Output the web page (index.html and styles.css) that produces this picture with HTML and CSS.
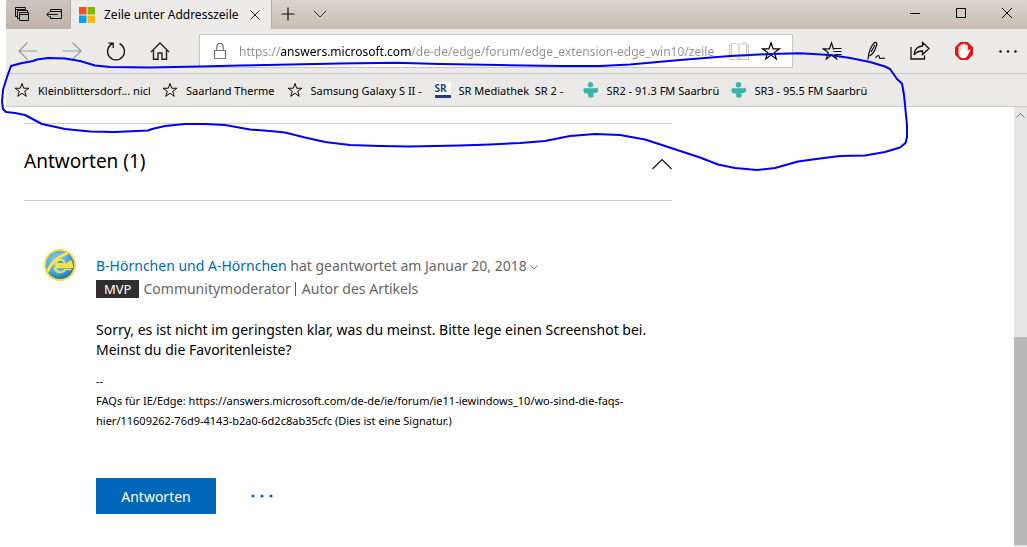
FILE: index.html
```html
<!DOCTYPE html>
<html lang="de">
<head>
<meta charset="utf-8">
<title>Zeile unter Addresszeile</title>
<link rel="stylesheet" href="styles.css">
</head>
<body>
<svg class="defs" width="0" height="0" aria-hidden="true">
  <symbol id="star" viewBox="0 0 20 20"><path d="M10 1.8 12.1 7.8H18.6L13.4 11.6 15.3 17.9 10 14.1 4.7 17.9 6.6 11.6 1.4 7.8H7.9Z" fill="none" stroke="currentColor" stroke-width="1.2"/></symbol>
  <symbol id="tunein" viewBox="0 0 16 16"><g fill="#38b4a8"><circle cx="7.5" cy="2.7" r="2.7"/><path d="M2 6.200H12L14.800 5.800 15.200 8.500C15 10.500 13 11 10.500 11V14.600Q8 17 5.200 14.800V11.500H3Q.4 11 .4 8.500T2 6.200Z"/></g></symbol>
</svg>
<div class="window">
  <header class="chrome">
    <div class="tabbar">
      <div class="tab-tools">
        <button class="tab-btn" aria-label="Beiseitegelegte Tabs"><svg width="16" height="16" viewBox="0 0 16 16" fill="none" stroke="#111"><path d="M3.5 10.5H1.5V1.500H11.500V3.500M1.500 3.500H11M5.500 12.500H3.500V4.500H13.500V6.500M5.500 6.500H14.500V14.500H5.500ZM5.500 8.500H14.500"/></svg></button>
        <button class="tab-btn" aria-label="Tabs beiseitelegen"><svg width="16" height="16" viewBox="0 0 16 16" fill="none" stroke="#111"><path d="M4.500 6V3.500H15.500V12.500H4.500V10M4.500 5.500H15.500M.8 8.500H11.500M3.500 5.800.8 8.500 3.500 11.200"/></svg></button>
      </div>
      <div class="tab">
        <svg width="16" height="16" viewBox="0 0 16 16"><path fill="#f25022" d="M0 0h7.500v7.500H0z"/><path fill="#7fba00" d="M8.500 0H16v7.500H8.500z"/><path fill="#00a4ef" d="M0 8.500h7.500V16H0z"/><path fill="#ffb900" d="M8.500 8.500H16V16H8.500z"/></svg>
        <span class="tab-title">Zeile unter Addresszeile</span>
        <button class="tab-btn" aria-label="Tab schließen"><svg width="12" height="12" viewBox="0 0 12 12" stroke="#222"><path d="M1.500 1.500 10.500 10.500M10.500 1.500 1.500 10.500"/></svg></button>
      </div>
      <button class="tab-btn" aria-label="Neuer Tab"><svg width="14" height="14" viewBox="0 0 14 14" stroke="#111" stroke-width="1.200"><path d="M7 .5V13.500M.5 7H13.500"/></svg></button>
      <button class="tab-btn" aria-label="Tabvorschau"><svg width="14" height="14" viewBox="0 0 14 14" fill="none" stroke="#333"><path d="M1 4 7 10 13 4"/></svg></button>
      <div class="win-controls">
        <button class="win-btn" aria-label="Minimieren"><svg width="12" height="12" viewBox="0 0 12 12" stroke="#000"><path d="M1 6.500H11"/></svg></button>
        <button class="win-btn" aria-label="Maximieren"><svg width="12" height="12" viewBox="0 0 12 12" fill="none" stroke="#000"><path d="M1.500 1.500H10.500V10.500H1.500Z"/></svg></button>
        <button class="win-btn" aria-label="Schließen"><svg width="12" height="12" viewBox="0 0 12 12" stroke="#000"><path d="M1 1 11 11M11 1 1 11"/></svg></button>
      </div>
    </div>

    <div class="toolbar">
      <button class="tool" aria-label="Zurück"><svg width="20" height="20" viewBox="0 0 20 20" fill="none" stroke="#999" stroke-width="1.200"><path d="M19.500 10H1M9.500 1.500 1 10 9.500 18.500"/></svg></button>
      <button class="tool" aria-label="Vorwärts"><svg width="20" height="20" viewBox="0 0 20 20" fill="none" stroke="#999" stroke-width="1.200"><path d="M.5 10H19M10.500 1.500 19 10 10.500 18.500"/></svg></button>
      <button class="tool" aria-label="Aktualisieren"><svg width="20" height="20" viewBox="0 0 20 20" fill="none" stroke="#111" stroke-width="1.300"><path d="M6.500 2.700A8.500 8.500 0 1 0 13.500 2.700M2.500 2.200H7.200V7"/></svg></button>
      <button class="tool" aria-label="Startseite"><svg width="20" height="20" viewBox="0 0 20 20" fill="none" stroke="#222" stroke-width="1.400"><path d="M1 11 10 2 19 11M3.500 9V18.300H8V12H12V18.300H16.500V9"/></svg></button>
      <div class="address">
        <svg width="14" height="18" viewBox="0 0 14 18" fill="none" stroke="#777" stroke-width="1.200"><path d="M1.500 8.500H12.500V16.500H1.500ZM3.800 8.500V4.500A3.200 3.200 0 0 1 10.200 4.500V8.500"/></svg>
        <input class="url" type="text" aria-label="Adresse" value="https://answers.microsoft.com/de-de/edge/forum/edge_extension-edge_win10/zeile">
        <button class="address-btn" aria-label="Leseansicht"><svg width="20" height="20" viewBox="0 0 20 20" fill="none" stroke="#c4c4c4"><path d="M10 4.500C8 2 4.500 2 2.500 2.500V16C5 15.500 8 15.500 10 18 12 15.500 15 15.500 17.500 16V2.500C15.500 2 12 2 10 4.500V18M2.500 4.500H.5V18.500H19.500V4.500H17.500"/></svg></button>
        <button class="address-btn" aria-label="Zu Favoriten hinzufügen"><svg width="20" height="20"><use href="#star"/></svg></button>
      </div>
      <button class="tool" aria-label="Favoriten"><svg width="20" height="20" viewBox="0 0 20 20" fill="none" stroke="#111" stroke-width="1.200"><path d="M12.500 7.800H11.400L9.500 1.800 7.500 7.800H1.200L6.200 11.600 4.300 17.900 9.500 14.100 14.500 17.700 12.800 13.500M12 7.500H19.500M11.500 10.500H19.500M13 13.500H19.500"/></svg></button>
      <button class="tool" aria-label="Webseitennotiz"><svg width="20" height="20" viewBox="0 0 20 20" fill="none" stroke="#111" stroke-width="1.200"><path d="M2 18.500C2.500 12 5 5 8.500 1.500 11 .8 11.500 3 10 6 8.500 10.500 6.500 13.500 3.500 15M5 11 9 4M9.500 17C11 14.500 12.500 14 13 15S13 17.500 14.500 17.500 16.500 16.500 19 17.500"/></svg></button>
      <button class="tool" aria-label="Teilen"><svg width="20" height="20" viewBox="0 0 20 20" fill="none" stroke="#111" stroke-width="1.300"><path d="M1 6V18H14.500V14.500M12.500 1.500 19 7.500 12.500 13.500V10C8.500 10 6 11 4 14 4.500 8.500 7.500 5.300 12.500 5Z"/></svg></button>
      <button class="tool" aria-label="AdBlock"><svg width="20" height="20" viewBox="0 0 20 20"><path fill="#ee1212" d="M6.200 1H13.800L19 6.200V13.800L13.800 19H6.200L1 13.800V6.200Z"/><path fill="#fff" d="M4.600 10.500V5.500Q5.600 4.500 6.600 5.500V3.800Q7.700 2.700 8.800 3.800V3Q10 2 11.300 3V4.200Q12.600 3.200 13.700 4.500V10L15.300 8.300Q16.700 8.200 16.300 9.600L13.200 15.300Q12 17.500 9 17.300 5 16.700 4.600 13Z"/><path d="M6.700 5.500V9.500M8.900 4V9M11.300 4V9" stroke="#e9b0b0" stroke-width=".6"/></svg></button>
      <button class="tool" aria-label="Einstellungen und mehr"><svg width="20" height="20" viewBox="0 0 20 20" fill="#111"><circle cx="2.500" cy="10.500" r="1.200"/><circle cx="10" cy="10.500" r="1.200"/><circle cx="17.500" cy="10.500" r="1.200"/></svg></button>
    </div>

    <nav class="favorites" aria-label="Favoritenleiste">
      <a class="fav" href="#"><svg width="16" height="16"><use href="#star"/></svg><span>Kleinblittersdorf... nicht</span></a>
      <a class="fav fav-short" href="#"><svg width="16" height="16"><use href="#star"/></svg><span>Saarland Therme</span></a>
      <a class="fav" href="#"><svg width="16" height="16"><use href="#star"/></svg><span>Samsung Galaxy S II -</span></a>
      <a class="fav" href="#"><b class="sr-logo">SR</b><span>SR Mediathek  SR 2 -</span></a>
      <a class="fav" href="#"><svg width="16" height="16"><use href="#tunein"/></svg><span>SR2 - 91.3 FM Saarbrücken</span></a>
      <a class="fav" href="#"><svg width="16" height="16"><use href="#tunein"/></svg><span>SR3 - 95.5 FM Saarbrücken</span></a>
    </nav>
  </header>

  <div class="viewport">
    <main class="page">
      <div class="answers-head">
        <h2>Antworten (1)</h2>
        <button class="collapse" aria-label="Einklappen"><svg width="20" height="12" viewBox="0 0 20 12" fill="none" stroke="#111" stroke-width="1.200"><path d="M.5 11 10 1.500 19.500 11"/></svg></button>
      </div>
      <article class="answer">
        <svg class="avatar" width="32" height="32" viewBox="0 0 32 32">
          <defs><radialGradient id="ball" cx=".4" cy=".35" r=".65"><stop offset="0" stop-color="#8fd6f4"/><stop offset=".6" stop-color="#4aaee0"/><stop offset="1" stop-color="#1f78b8"/></radialGradient></defs>
          <circle cx="16" cy="16" r="16" fill="#f6da3c"/>
          <circle cx="16" cy="16" r="14" fill="url(#ball)"/>
          <path d="M10 18.500H29.500M10.500 18.500C11 25 19 25 21.500 20.500H27" fill="none" stroke="#f6e04c" stroke-width="1.200"/>
          <path d="M11 14.500C12 8 20.500 8 21.500 14.500ZM11.500 18H29C29 15 28.500 13 27 11L22 14.500H11Z" fill="#f8e04a"/>
          <path d="M13.500 14C14.500 11 18.500 11 19.500 14Z" fill="#3f9fd6"/>
          <path d="M11.500 18.500C13 24 19 24 21.500 20.500L27.500 20.500" fill="none" stroke="#f8e04a" stroke-width="1.500"/>
          <path d="M3.500 23C6 14.500 14 7 24 4" fill="none" stroke="#f6da3c" stroke-width="3"/>
          <path d="M4.500 21C8 14 15 7.500 23 4.500" fill="none" stroke="#fff3a0"/>
        </svg>
        <div class="answer-body">
          <p class="byline"><a href="#">B-Hörnchen und A-Hörnchen</a> hat geantwortet am Januar 20, 2018 <svg width="8" height="5" viewBox="0 0 8 5" fill="none" stroke="#888"><path d="M.5.5 4 4 7.500.5"/></svg></p>
          <p class="roles"><span class="mvp">MVP</span><span>Communitymoderator</span><span class="author">Autor des Artikels</span></p>
          <p class="text">Sorry, es ist nicht im geringsten klar, was du meinst. Bitte lege einen Screenshot bei.<br>Meinst du die Favoritenleiste?</p>
          <p class="signature">--<br>FAQs für IE/Edge: https://answers.microsoft.com/de-de/ie/forum/ie11-iewindows_10/wo-sind-die-faqs-<br>hier/11609262-76d9-4143-b2a0-6d2c8ab35cfc (Dies ist eine Signatur.)</p>
          <div class="actions">
            <button class="reply">Antworten</button>
            <button class="more" aria-label="Weitere Optionen"><svg width="24" height="6" viewBox="0 0 24 6" fill="#0067d0"><circle cx="3" cy="3" r="1.600"/><circle cx="12" cy="3" r="1.600"/><circle cx="21" cy="3" r="1.600"/></svg></button>
          </div>
        </div>
      </article>
    </main>
    <div class="scrollbar" aria-hidden="true">
      <svg width="9" height="6" viewBox="0 0 9 6" fill="none" stroke="#777"><path d="M.5 5.500 4.500 1.500 8.500 5.500"/></svg>
      <div class="thumb"></div>
    </div>
  </div>
</div>

<svg class="marker" width="912" height="174" viewBox="0 0 912 174" aria-hidden="true"><path d="M11 66 20 63.500 33 61 37 59.500 48 58 65 58.500 80 61 95 65.500 110 67 150 67.500 200 66.500 240 65.500 340 63.500 395 62.700 440 64 500 65 560 66 600 66 630 64.500 680 60 730 56 770 54 800 53.300 830 55 850 58 870 62 885 66.500 890 69 897 79 902 83.500 904 95 905.500 110 907 125 907 137 905.500 143 900 147.500 885 152 865 155.500 840 156 820 158.500 798 161.500 775 168 757 170 735 168 718 164.500 700 157.500 665 146 645 139.500 620 135 595 134 570 136 545 141 520 143 490 144.500 460 145.500 410 146.500 380 146 350 145 325 142 305 137.500 285 132.500 270 131 250 129.500 225 125 205 124 185 124 165 126 152 129 148 130.500 115 132 90 131.500 65 129 42 124 25 115 15 113 6 112 3 109 2 102 3 90 7 77Z"/></svg>
</body>
</html>
```
FILE: styles.css
```css
* { box-sizing: border-box; }

body {
  margin: 0;
  overflow-x: hidden;
  position: relative;
  background: #fff;
  color: #000;
  font-family: "Noto Sans", "Open Sans", sans-serif;
  font-size: 14px;
}

p, h2 { margin: 0; }

a { text-decoration: none; }

button {
  display: flex;
  align-items: center;
  justify-content: center;
  flex: none;
  padding: 0;
  border: 0;
  background: none;
  font: inherit;
}

.defs { position: absolute; }

.window {
  display: flex;
  flex-direction: column;
  min-height: 100vh;
  padding-left: 6px;
}

/* Browser chrome */
.chrome { margin-right: -3px; }

.tabbar {
  display: flex;
  height: 29px;
  background: linear-gradient(#dcd4cc, #c8beb6);
}

.tab-tools {
  display: flex;
  background: linear-gradient(#cec5bf, #c0b2aa);
}

.tab-btn {
  width: 32px;
  height: 27px;
}

.tab {
  display: flex;
  align-items: center;
  width: 202px;
  padding-left: 8px;
  border: solid #b5aea8;
  border-width: 0 1px;
  background: #edebe9;
}

.tab-title {
  flex: 1;
  margin-left: 9px;
  overflow: hidden;
  white-space: nowrap;
  font-size: 12px;
}

.win-controls {
  display: flex;
  margin-left: auto;
}

.win-btn {
  width: 46px;
  height: 26px;
}

.toolbar {
  display: flex;
  align-items: center;
  height: 45px;
  border-bottom: 1px solid #cbcac9;
  background: #edebe9;
}

.tool {
  width: 44px;
  height: 44px;
}

.address {
  display: flex;
  flex: 1;
  align-items: center;
  height: 34px;
  min-width: 0;
  margin: 0 17px;
  padding: 0 5px 0 13px;
  border: 1px solid #c8c6c5;
  background: #fff;
}

.url {
  flex: 1;
  min-width: 0;
  height: 24px;
  margin: 0 4px 0 12px;
  padding: 0;
  border: 0;
  outline: 0;
  font-family: inherit;
  font-size: 12px;
  background: linear-gradient(90deg, #919191 41px, #000 41px, #000 172px, #919191 172px);
  -webkit-background-clip: text;
  background-clip: text;
  color: transparent;
}

.address-btn {
  width: 32px;
  height: 32px;
}

.favorites {
  display: flex;
  gap: 12px;
  height: 33px;
  padding-left: 8px;
  border-bottom: 1px solid #cbcac9;
  background: #ebe9e7;
}

.fav {
  display: flex;
  align-items: center;
  gap: 8px;
  color: #000;
  font-size: 11px;
}

.fav span {
  width: 112px;
  overflow: hidden;
  white-space: pre;
}

.fav-short span { width: auto; }

.sr-logo {
  width: 16px;
  height: 16px;
  border-bottom: 3px solid #1e3f86;
  background: #fff;
  color: #1e3f86;
  font-size: 10px;
  line-height: 13px;
}

/* Page */
.viewport {
  display: flex;
  flex: 1;
}

.page {
  flex: 1;
  padding: 16px 18px 32px;
}

.answers-head {
  display: flex;
  align-items: center;
  justify-content: space-between;
  max-width: 648px;
  height: 78px;
  border: solid #ccc;
  border-width: 1px 0;
}

.answers-head h2 {
  padding-bottom: 2px;
  font-size: 19px;
  font-weight: 400;
}

.collapse { padding-top: 4px; }

.answer {
  display: flex;
  gap: 20px;
  max-width: 648px;
  padding: 48px 0 0 20px;
}

.avatar { flex: none; }

.answer-body {
  padding-top: 5px;
  white-space: nowrap;
}

.byline, .roles {
  color: #666;
  line-height: 24px;
}

.byline a { color: #0067b8; }
.byline svg { vertical-align: middle; }

.roles {
  display: flex;
  align-items: center;
  line-height: 22px;
}

.mvp {
  margin-right: 4px;
  padding: 0 8px;
  background: #2f2f2f;
  color: #fff;
  font-size: 13px;
  line-height: 18px;
}

.author {
  margin-left: 4px;
  padding-left: 6px;
  border-left: 1px solid #555;
  line-height: 14px;
}

.text {
  margin-top: 20px;
  line-height: 20px;
}

.signature {
  margin-top: 11px;
  font-size: 11px;
  line-height: 20px;
}

.actions {
  display: flex;
  align-items: center;
  gap: 32px;
  margin-top: 47px;
}

.reply {
  width: 120px;
  height: 36px;
  background: #0067b8;
  color: #fff;
}

.more {
  width: 28px;
  height: 36px;
}

.scrollbar {
  display: flex;
  flex-direction: column;
  align-items: center;
  width: 13px;
  padding: 5px 0 2px;
  background: #e6e6e6;
}

.thumb {
  width: 100%;
  height: 48%;
  margin-top: auto;
  background: #b8b8b8;
}

/* Hand-drawn outline laid over the window */
.marker {
  position: absolute;
  top: 0;
  left: 0;
  pointer-events: none;
}

.marker path {
  fill: none;
  stroke: #0000f5;
  stroke-width: 2;
  stroke-linejoin: round;
}
```
